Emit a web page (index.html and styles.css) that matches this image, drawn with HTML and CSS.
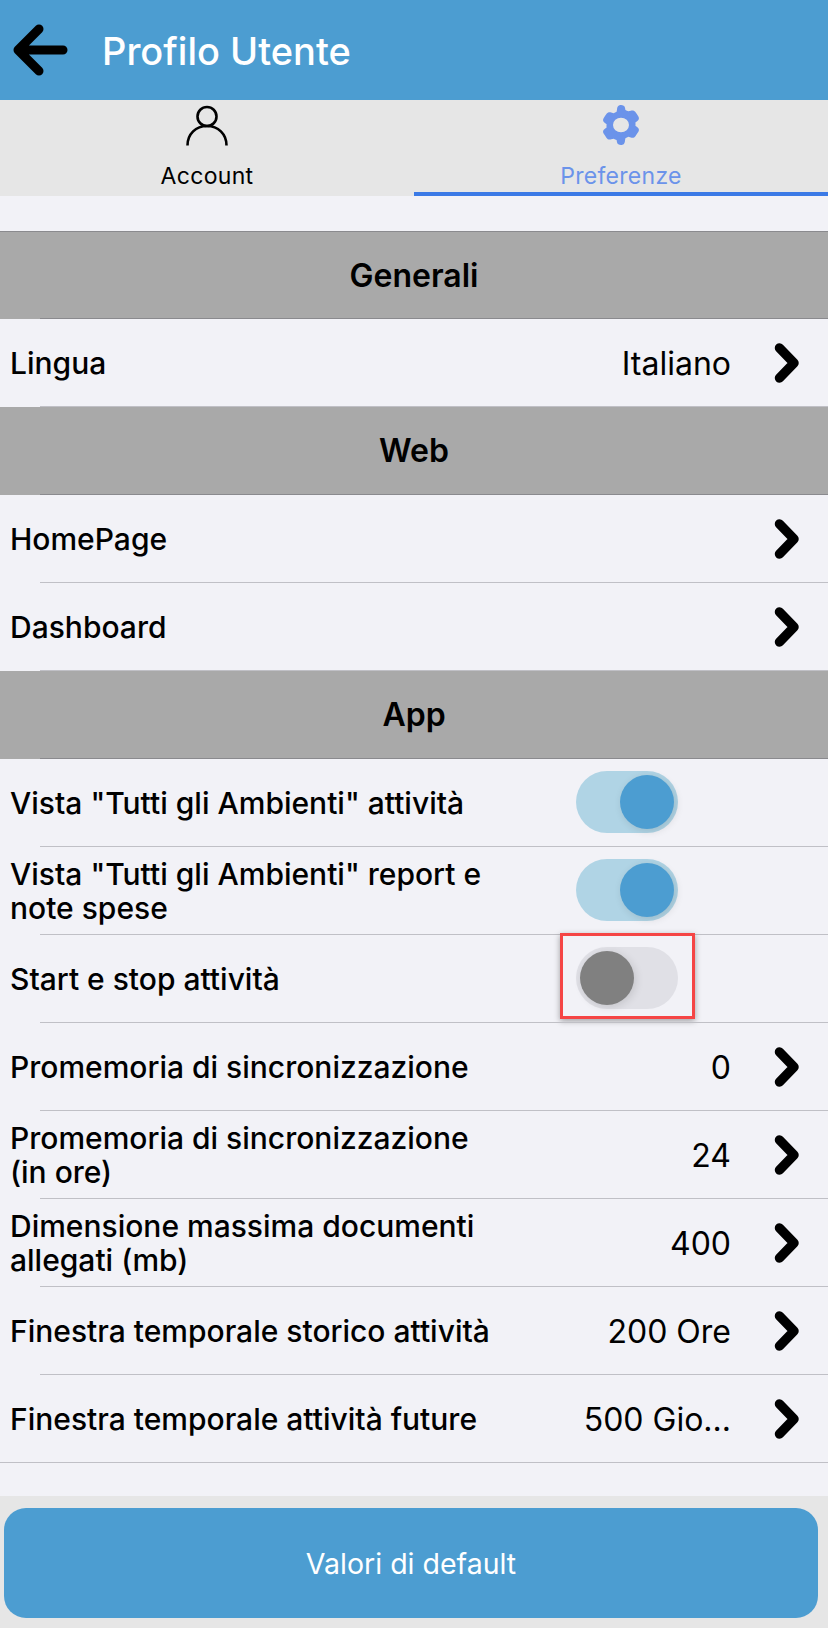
FILE: index.html
```html
<!DOCTYPE html>
<html lang="it">
<head>
<meta charset="utf-8">
<title>Profilo Utente</title>
<link rel="stylesheet" href="styles.css">
</head>
<body>
<div class="app">
  <header class="topbar">
    <svg class="back" viewBox="0 0 56 54" aria-hidden="true"><path d="M51 27H8M27 6 6 27l21 21" fill="none" stroke="#000" stroke-width="9" stroke-linecap="round" stroke-linejoin="round"/></svg>
    <h1 class="title">Profilo Utente</h1>
  </header>
  <nav class="tabs">
    <div class="tab">
      <svg class="tab-icon" viewBox="0 0 42 42" aria-hidden="true"><circle cx="21" cy="11.5" r="9.500" fill="none" stroke="#000" stroke-width="2.600"/><path d="M1.500 40.500C1.500 29 10 21 21 21s19.500 8 19.500 19.500" fill="none" stroke="#000" stroke-width="2.600"/></svg>
      <span class="tab-label">Account</span>
    </div>
    <div class="tab tab-active">
      <svg class="tab-icon tab-gear" viewBox="2 1 20 22" preserveAspectRatio="none" aria-hidden="true"><path fill="#6b93ea" fill-rule="evenodd" d="M12 1c1 0 1.900.5 2 1.500l.2 1.200c.5.2 1 .5 1.500.8l1.200-.4c1-.3 1.900 0 2.400.9.500.8.900 1.500 1.400 2.300.5.900.3 1.900-.5 2.500l-1 .8c.1.600.1 1.200 0 1.800l1 .8c.8.600 1 1.600.5 2.500-.5.800-.9 1.500-1.400 2.300-.5.900-1.400 1.200-2.400.9l-1.200-.4c-.5.300-1 .6-1.500.8l-.2 1.200C13.900 22.500 13 23 12 23s-1.900-.5-2-1.500l-.2-1.200c-.5-.2-1-.5-1.500-.8l-1.200.4c-1 .3-1.900 0-2.400-.9-.5-.8-.9-1.500-1.400-2.300-.5-.9-.3-1.900.5-2.500l1-.8c-.1-.6-.1-1.200 0-1.800l-1-.8c-.8-.6-1-1.600-.5-2.500.5-.8.900-1.500 1.400-2.300.5-.9 1.400-1.200 2.400-.9l1.200.4c.5-.3 1-.6 1.500-.8l.2-1.200C10.100 1.500 11 1 12 1Zm0 7a4 4 0 1 0 0 8 4 4 0 0 0 0-8Z"/></svg>
      <span class="tab-label">Preferenze</span>
    </div>
  </nav>
  <main class="content">
    <h2 class="section section-first">Generali</h2>
    <div class="row">
      <span class="label">Lingua</span><span class="value">Italiano</span>
      <svg class="chev" viewBox="0 0 25 40" aria-hidden="true"><path d="M5.500 5 20 20 5.500 35" fill="none" stroke="#000" stroke-width="9.500" stroke-linecap="round" stroke-linejoin="round"/></svg>
    </div>
    <h2 class="section">Web</h2>
    <div class="row">
      <span class="label">HomePage</span><span class="value"></span>
      <svg class="chev" viewBox="0 0 25 40" aria-hidden="true"><path d="M5.500 5 20 20 5.500 35" fill="none" stroke="#000" stroke-width="9.500" stroke-linecap="round" stroke-linejoin="round"/></svg>
    </div>
    <div class="row">
      <span class="label">Dashboard</span><span class="value"></span>
      <svg class="chev" viewBox="0 0 25 40" aria-hidden="true"><path d="M5.500 5 20 20 5.500 35" fill="none" stroke="#000" stroke-width="9.500" stroke-linecap="round" stroke-linejoin="round"/></svg>
    </div>
    <h2 class="section">App</h2>
    <div class="row">
      <span class="label label-narrow">Vista "Tutti gli Ambienti" attività</span>
      <span class="switch switch-on"><span class="knob"></span></span>
    </div>
    <div class="row">
      <span class="label label-narrow">Vista "Tutti gli Ambienti" report e note spese</span>
      <span class="switch switch-on"><span class="knob"></span></span>
    </div>
    <div class="row">
      <span class="label label-narrow">Start e stop attività</span>
      <span class="switch"><span class="knob"></span><span class="highlight"></span></span>
    </div>
    <div class="row">
      <span class="label label-narrow">Promemoria di sincronizzazione</span><span class="value">0</span>
      <svg class="chev" viewBox="0 0 25 40" aria-hidden="true"><path d="M5.500 5 20 20 5.500 35" fill="none" stroke="#000" stroke-width="9.500" stroke-linecap="round" stroke-linejoin="round"/></svg>
    </div>
    <div class="row">
      <span class="label label-narrow">Promemoria di sincronizzazione (in ore)</span><span class="value">24</span>
      <svg class="chev" viewBox="0 0 25 40" aria-hidden="true"><path d="M5.500 5 20 20 5.500 35" fill="none" stroke="#000" stroke-width="9.500" stroke-linecap="round" stroke-linejoin="round"/></svg>
    </div>
    <div class="row">
      <span class="label label-narrow">Dimensione massima documenti allegati (mb)</span><span class="value">400</span>
      <svg class="chev" viewBox="0 0 25 40" aria-hidden="true"><path d="M5.500 5 20 20 5.500 35" fill="none" stroke="#000" stroke-width="9.500" stroke-linecap="round" stroke-linejoin="round"/></svg>
    </div>
    <div class="row">
      <span class="label label-wide">Finestra temporale storico attività</span><span class="value">200 Ore</span>
      <svg class="chev" viewBox="0 0 25 40" aria-hidden="true"><path d="M5.500 5 20 20 5.500 35" fill="none" stroke="#000" stroke-width="9.500" stroke-linecap="round" stroke-linejoin="round"/></svg>
    </div>
    <div class="row row-last">
      <span class="label label-wide">Finestra temporale attività future</span><span class="value">500 Gio...</span>
      <svg class="chev" viewBox="0 0 25 40" aria-hidden="true"><path d="M5.500 5 20 20 5.500 35" fill="none" stroke="#000" stroke-width="9.500" stroke-linecap="round" stroke-linejoin="round"/></svg>
    </div>
  </main>
  <footer class="footer">
    <button class="default-btn" type="button">Valori di default</button>
  </footer>
</div>
</body>
</html>
```
FILE: styles.css
```css
* { box-sizing: border-box; }
html, body { margin: 0; padding: 0; }
body { background: #f2f2f7; font-family: Inter, "Noto Sans", sans-serif; color: #000; }
.app { width: 828px; height: 1628px; display: flex; flex-direction: column; overflow: hidden; }
.topbar { height: 100px; background: #4c9dd1; display: flex; align-items: center; padding-left: 12px; }
.back { width: 56px; height: 54px; flex: none; }
.title { margin: 2px 0 0 34px; color: #fff; font-size: 38px; font-weight: 550; line-height: 1; }
.tabs { height: 96px; background: #e6e6e6; display: flex; }
.tab { flex: 1; display: flex; flex-direction: column; align-items: center; padding-top: 5px; }
.tab-active { border-bottom: 4px solid #3b7ae6; color: #6b93ea; }
.tab-icon { width: 42px; height: 42px; }
.tab-gear { width: 40px; height: 40px; margin-bottom: 2px; }
.tab-label { margin-top: 16px; font-size: 23px; line-height: 26px; letter-spacing: .3px; }
.content { flex: 1; padding-top: 35px; }
.section { margin: 0; height: 88px; background: #a9a9a9; display: flex; align-items: center; justify-content: center; font-size: 32px; font-weight: 600; position: relative; padding-bottom: 1px; }
.section-first { border-top: 1px solid #8a8a8e; }
.section::after { content: ""; position: absolute; left: 40px; right: 0; bottom: 0; height: 1px; background: #8a8a8e; }
.row { height: 88px; display: flex; align-items: center; padding: 0 29px 0 10px; position: relative; }
.row::after { content: ""; position: absolute; left: 40px; right: 0; bottom: 0; height: 1px; background: #c0c0c6; }
.row-last::after { left: 0; }
.label { font-size: 30px; font-weight: 550; line-height: 34px; }
.label-narrow { width: 480px; }
.value { flex: 1; text-align: right; font-size: 32px; padding-right: 43px; }
.chev { width: 25px; height: 40px; flex: none; }
.switch { width: 102px; height: 62px; margin-left: 86px; margin-bottom: 2px; border-radius: 31px; background: #e0e0e6; display: flex; align-items: center; padding: 0 4px; position: relative; }
.knob { width: 54px; height: 54px; border-radius: 50%; background: #808080; box-shadow: 2px 2px 8px rgba(0,0,0,.12); }
.switch-on { background: #b0d4e5; justify-content: flex-end; }
.switch-on .knob { background: #4c9dd1; }
.highlight { position: absolute; left: -16px; top: -14px; width: 135px; height: 86px; border: 3px solid #f54545; box-shadow: 0 2px 6px rgba(0,0,0,.35); }
.footer { height: 132px; background: #e6e6e6; padding: 12px 10px 10px 4px; }
.default-btn { width: 100%; height: 110px; border: 0; border-radius: 22px; background: #4c9dd1; color: #fff; font-family: inherit; font-size: 28.500px; }
```
